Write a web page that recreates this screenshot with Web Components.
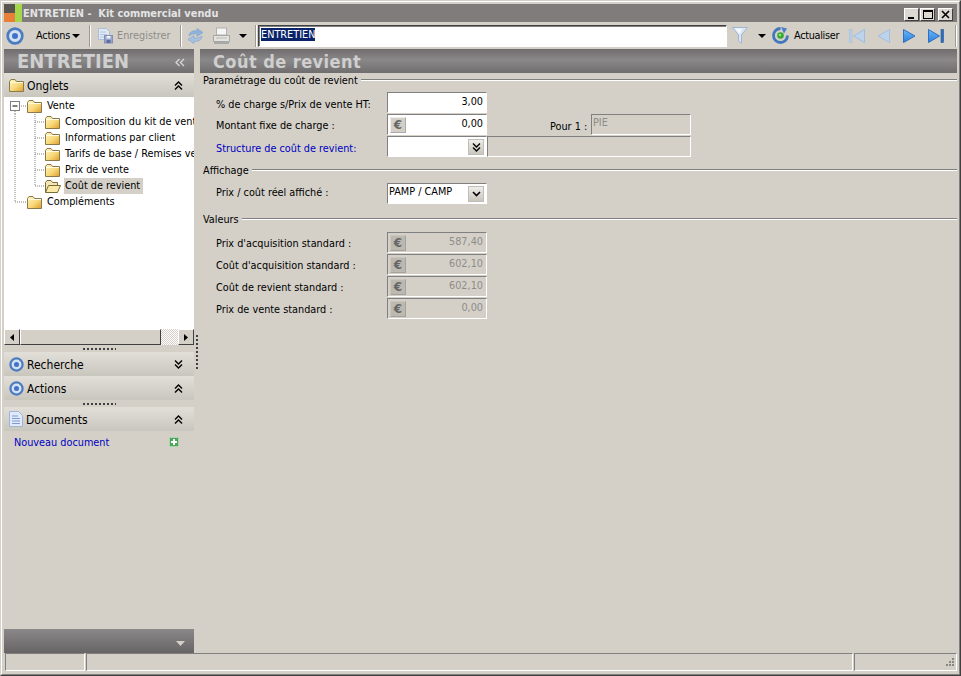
<!DOCTYPE html>
<html lang="fr"><head><meta charset="utf-8"><title>ENTRETIEN</title>
<style>
html,body{margin:0;padding:0;height:100%;overflow:hidden;background:#d4d0c8}
body{font:10.8px "DejaVu Sans Condensed","DejaVu Sans",sans-serif;font-stretch:condensed;color:#000}
</style></head><body>
<x-window>
  <x-titlebar slot="title">ENTRETIEN -&nbsp; Kit commercial vendu</x-titlebar>
  <x-toolbar slot="tools"></x-toolbar>
  <x-sidebar slot="side"></x-sidebar>
  <x-splitdots slot="split"></x-splitdots>
  <x-main slot="main"></x-main>
  <x-statusbar slot="status"></x-statusbar>
</x-window>
<script>
const TARGET=(s)=>`<svg width="${s}" height="${s}" viewBox="0 0 16 16"><circle cx="8" cy="8" r="6.500" fill="#d5e1f3" stroke="#4c7cc0" stroke-width="2.400"/><circle cx="8" cy="8" r="2.700" fill="#3f74c6"/></svg>`;
const ICONS={
target:TARGET(15),
targetbig:TARGET(18),
save:`<svg width="17" height="17" viewBox="0 0 17 17"><path d="M1.500 1.500h8l3 3v8h-11z" fill="#dfe8f5" stroke="#aebdd6"/><path d="M3 5h6M3 7.500h7M3 10h4" stroke="#b7c6de"/><rect x="7.500" y="8.500" width="8" height="7.500" fill="#98a6cc" stroke="#8490b5"/><rect x="9.500" y="9" width="4" height="2.500" fill="#eef1f8"/><rect x="9.500" y="13" width="4" height="3" fill="#5f6d9d"/></svg>`,
sync:`<svg width="17" height="18" viewBox="0 0 17 18"><path d="M2 9C2 5 6 3 10 4V1.500L16 5.500 10 9.500V7C7 6.500 4.500 7 2 9z" fill="#8fb4dc" stroke="#7d9fc6" stroke-width=".6"/><path d="M15 9c0 4-4 6-8 5v2.500L1 12.500 7 8.500V11c3 .5 5.500 0 8-2z" fill="#a7c2e0" stroke="#7d9fc6" stroke-width=".6"/></svg>`,
print:`<svg width="19" height="18" viewBox="0 0 19 18"><rect x="4.500" y="1" width="10" height="7" fill="#f6f6f6" stroke="#b0b0b0"/><path d="M1.500 8.500h16v6h-16z" fill="#e4e3df" stroke="#a5a5a3"/><rect x="2" y="14.500" width="15" height="2.500" fill="#a9a9a6"/><rect x="4" y="10.500" width="11" height="1" fill="#b9b9b6"/></svg>`,
caret:`<svg width="8" height="4" viewBox="0 0 8 4"><path d="M0 0h8L4 4z" fill="#000"/></svg>`,
funnel:`<svg width="16" height="17" viewBox="0 0 16 17"><path d="M.5 .5h15L9.500 8v8l-3-2V8z" fill="#dbe7f4" stroke="#9fb6d2"/><path d="M3 1.500h7L7.500 7z" fill="#f5f9fd"/></svg>`,
refresh:`<svg width="17" height="17" viewBox="0 0 17 17"><path d="M8.500 1.500a7 7 0 1 0 7 7" fill="none" stroke="#4277bd" stroke-width="2.800"/><path d="M9 0l6 1.500-3 5z" fill="#4a80c4"/><circle cx="8.500" cy="8.500" r="3.300" fill="#36a82f"/><circle cx="8" cy="8" r="1.300" fill="#8fe07f"/></svg>`,
first:`<svg width="16" height="14" viewBox="0 0 16 14"><rect x=".5" y=".5" width="2.500" height="13" fill="#b5cde8" stroke="#a4bedb" stroke-width=".6"/><path d="M15.500 .5v13L4.500 7z" fill="#bdd3ec" stroke="#a3bedd"/></svg>`,
prev:`<svg width="13" height="14" viewBox="0 0 13 14"><path d="M12.500 .5v13L1 7z" fill="#bdd3ec" stroke="#a3bedd"/></svg>`,
next:`<svg width="13" height="14" viewBox="0 0 13 14"><defs><linearGradient id="nx" x1="0" y1="0" x2="0" y2="1"><stop offset="0" stop-color="#6db8f5"/><stop offset="1" stop-color="#2a7de0"/></linearGradient></defs><path d="M.5 .5v13L12 7z" fill="url(#nx)" stroke="#2f6fc0"/></svg>`,
last:`<svg width="16" height="14" viewBox="0 0 16 14"><defs><linearGradient id="lx" x1="0" y1="0" x2="0" y2="1"><stop offset="0" stop-color="#6db8f5"/><stop offset="1" stop-color="#2a7de0"/></linearGradient></defs><path d="M.5 .5v13L11.500 7z" fill="url(#lx)" stroke="#2f6fc0"/><rect x="13" y=".5" width="2.500" height="13" fill="#2f6fc0" stroke="#25558f" stroke-width=".6"/></svg>`,
folder:`<svg width="15" height="13" viewBox="0 0 15 13"><defs><linearGradient id="fg" x1="0" y1="0" x2="1" y2="1"><stop offset="0" stop-color="#fff6c4"/><stop offset=".55" stop-color="#f8d878"/><stop offset="1" stop-color="#dd9c2c"/></linearGradient></defs><path d="M.5 2.500 2 .5h4l1.500 2h7v10H.5z" fill="url(#fg)" stroke="#8a7a4a"/><path d="M1 3.500h13" stroke="#fffbe0"/></svg>`,
folderopen:`<svg width="16" height="13" viewBox="0 0 16 13"><path d="M.5 12.500v-10L2 .5h4l1.500 2h5v3" fill="#f5e7b5" stroke="#7a6a3a"/><path d="M.5 12.500 3.500 5.500h12l-3 7z" fill="#fbe9a6" stroke="#7a6a3a"/></svg>`,
doc:`<svg width="14" height="16" viewBox="0 0 14 16"><path d="M.5 .5h9l4 4v11H.5z" fill="#dfe9fa" stroke="#9fb4d8"/><path d="M3 5h6M3 7.500h8M3 10h8M3 12.500h8" stroke="#7f9bd0"/></svg>`,
plus:`<svg width="10" height="10" viewBox="0 0 10 10"><rect width="10" height="10" fill="#4ea65a"/><rect x=".5" y=".5" width="9" height="9" fill="none" stroke="#a9d6ae"/><path d="M5 2v6M2 5h6" stroke="#fff" stroke-width="2"/></svg>`,
up:`<svg width="9" height="9" viewBox="0 0 9 9"><path d="M1 4.500 4.500 1 8 4.500M1 8.500 4.500 5 8 8.500" fill="none" stroke="#000" stroke-width="1.400"/></svg>`,
down:`<svg width="9" height="9" viewBox="0 0 9 9"><path d="M1 .5 4.500 4 8 .5M1 4.500 4.500 8 8 4.500" fill="none" stroke="#000" stroke-width="1.400"/></svg>`,
left2:`<svg width="10" height="9" viewBox="0 0 10 9"><path d="M4.500 1 1 4.500 4.500 8M9 1 5.500 4.500 9 8" fill="none" stroke="#d8d8d8" stroke-width="1.300"/></svg>`
};
function def(name,css,html,extra){
  customElements.define(name,class extends HTMLElement{
    constructor(){super();const r=this.attachShadow({mode:'open'});
      r.innerHTML=`<style>${css}</style>`+(typeof html==='function'?html(this):html);}
    connectedCallback(){ if(extra) extra.call(this,this.shadowRoot); }
  });
}
def('x-icon',':host{display:inline-flex;flex:none;line-height:0}','',function(r){
  const s=document.createElement('span');s.style.cssText='display:inline-flex';s.innerHTML=ICONS[this.getAttribute('name')]||'';r.appendChild(s);
});
def('x-window',`
:host{display:block;box-sizing:border-box;width:961px;height:676px;background:#d4d0c8;border:1px solid;border-color:#d4d0c8 #404040 #404040 #d4d0c8}
.a{box-sizing:border-box;height:100%;border:1px solid;border-color:#fff #808080 #808080 #fff;padding:2px;display:flex;flex-direction:column}
.b{flex:1;min-height:0;display:flex}
`,`<div class="a"><slot name="title"></slot><slot name="tools"></slot>
<div class="b"><slot name="side"></slot><slot name="split"></slot><slot name="main"></slot></div>
<slot name="status"></slot></div>`);
def('x-titlebar',`
:host{display:flex;flex:none;align-items:center;height:18px;background:#807c7c;color:#e4e4e4;font:bold 10.9px "DejaVu Sans Condensed","DejaVu Sans",sans-serif;font-stretch:condensed;white-space:pre}
.logo{width:18px;height:18px;flex:none;display:grid;grid-template:9px 9px/11px 7px;margin-right:1px}
.t{flex:1}
.btns{display:flex;margin-right:4px;padding-top:2px}
.btn{box-sizing:border-box;width:15px;height:13px;background:#dcd9d2;border:1px solid;border-color:#fff #404040 #404040 #fff;display:flex;align-items:center;justify-content:center;line-height:0}
`,`<div class="logo"><i style="background:#58544f"></i><i style="background:#a4d84a;grid-row:1/3;grid-column:2"></i><i style="background:#e8803a"></i></div>
<div class="t"><slot></slot></div>
<div class="btns">
<div class="btn" style="margin-right:1px"><svg width="9" height="9"><rect x="1" y="7" width="6" height="2" fill="#000"/></svg></div>
<div class="btn" style="margin-right:3px"><svg width="10" height="9"><rect x=".5" y=".5" width="9" height="8" fill="none" stroke="#000"/><rect x="0" y="0" width="10" height="2"/></svg></div>
<div class="btn"><svg width="9" height="9"><path d="M1 1l7 7M8 1 1 8" stroke="#000" stroke-width="1.600"/></svg></div>
</div>`);
def('x-toolbar',`
:host{display:flex;flex:none;align-items:center;height:27px;padding-left:2px;font:inherit}
.sep{width:1px;height:22px;background:#9c9a94;border-right:1px solid #fff;flex:none}
.tx{white-space:nowrap}
.dim{color:#8e8c88}
.inp{box-sizing:border-box;width:469px;height:22px;background:#fff;border:1px solid;border-color:#404040 #fff #fff #404040;box-shadow:inset 1px 1px 0 #808080;padding:2px 0 0 2px;flex:none}
.sel{background:#0a246a;color:#fff}
`,`<x-icon name="targetbig"></x-icon>
<span class="tx" style="margin-left:12px;width:34px;display:inline-block;letter-spacing:-.2px">Actions</span><x-icon name="caret" style="margin-left:2px"></x-icon>
<span class="sep" style="margin-left:9px"></span>
<x-icon name="save" style="margin-left:6px"></x-icon><span class="tx dim" style="margin-left:3px;width:53px;display:inline-block">Enregistrer</span>
<span class="sep" style="margin-left:10px"></span>
<x-icon name="sync" style="margin-left:5px"></x-icon><x-icon name="print" style="margin-left:8px"></x-icon><x-icon name="caret" style="margin-left:8px"></x-icon>
<span class="sep" style="margin-left:8px"></span>
<div class="inp" style="margin-left:1px"><span class="sel">ENTRETIEN</span></div>
<x-icon name="funnel" style="margin-left:5px"></x-icon><x-icon name="caret" style="margin-left:10px"></x-icon>
<x-icon name="refresh" style="margin-left:6px"></x-icon><span class="tx" style="margin-left:5px;width:46px;display:inline-block;letter-spacing:-.3px">Actualiser</span>
<x-icon name="first" style="margin-left:9px"></x-icon><x-icon name="prev" style="margin-left:12px"></x-icon><x-icon name="next" style="margin-left:13px"></x-icon><x-icon name="last" style="margin-left:12px"></x-icon>
<span class="sep" style="margin-left:11px"></span>`);
def('x-darkhead',`
:host{display:flex;align-items:center;flex:none;height:24px;background:linear-gradient(#6f6d6d,#8a8888 45%,#6f6d6d);color:#cfcfcf;font:bold 20px "DejaVu Sans Condensed","DejaVu Sans",sans-serif;font-stretch:condensed;padding-left:13px;white-space:nowrap;overflow:hidden}
.t{flex:1}
`,`<span class="t"><slot></slot></span><slot name="end"></slot>`);
def('x-panelhead',`
:host{display:flex;align-items:center;flex:none;height:24px;background:linear-gradient(#e2dfd9,#c9c6be);font-size:12px;padding-left:5px;white-space:nowrap}
.t{flex:1;margin-left:3px;padding-top:1px}
.end{margin-right:11px;display:flex}
`,`<slot name="icon"></slot><span class="t"><slot></slot></span><span class="end"><slot name="end"></slot></span>`);
def('x-treerow',`
:host{display:flex;height:16px;align-items:center;white-space:nowrap}
.l{padding:1px;margin-left:4px;line-height:14px;height:14px;display:block}
:host([selected]) .l{background:#d4d0c8;padding-right:3px;margin-left:3px}
svg{flex:none}
`,(h)=>{
 const k=h.getAttribute('k');const d='stroke="#808080" stroke-dasharray="1 1"';
 const m={root:[23,`<path d="M11 13v3" ${d}/><path d="M15 8h8" ${d}/><rect x="6.500" y="3.500" width="9" height="9" fill="#fff" stroke="#808080"/><path d="M8.500 8h5" stroke="#000"/>`],
  child:[41,`<path d="M11 0v16M31 0v16M31 8h10" ${d}/>`],
  lastchild:[41,`<path d="M11 0v16M31 0v8M31 8h10" ${d}/>`],
  lastroot:[23,`<path d="M11 0v8M11 8h11" ${d}/>`]}[k];
 return `<svg width="${m[0]}" height="16" viewBox="0 0 ${m[0]} 16">${m[1]}</svg><x-icon name="${h.hasAttribute('open')?'folderopen':'folder'}"></x-icon><span class="l"><slot></slot></span>`;
});
def('x-scrollbar',`
:host{display:flex;flex:none;height:16px;background:repeating-conic-gradient(#d4d0c8 0 25%,#fff 0 50%) 0 0/2px 2px}
.b{box-sizing:border-box;background:#d4d0c8;border:1px solid;border-color:#fff #404040 #404040 #fff;height:16px;display:flex;align-items:center;justify-content:center;flex:none}
`,`<div class="b" style="width:16px"><svg width="4" height="7"><path d="M4 0v7L0 3.500z"/></svg></div>
<div class="b" style="width:141px"></div><div style="flex:1"></div>
<div class="b" style="width:16px"><svg width="4" height="7"><path d="M0 0v7l4-3.500z"/></svg></div>`);
def('x-grip',`
:host{display:flex;flex:none;height:7px;justify-content:center;align-items:center}
div{width:33px;height:2px;background:repeating-linear-gradient(90deg,#404040 0 2px,transparent 2px 4px)}
`,`<div></div>`);
def('x-sidebar',`
:host{display:flex;flex-direction:column;flex:none;width:190px;height:100%;min-height:0}
.tree{flex:none;height:232px;background:#fff;padding-top:1px;overflow:hidden;box-sizing:border-box}
.link{height:22px;display:flex;align-items:center;padding:0 15px 0 10px;color:#0000c0;justify-content:space-between}
.sp{flex:1}
.foot{flex:none;height:24px;background:linear-gradient(#8a8888,#666464);display:flex;justify-content:flex-end;align-items:center;padding:4px 9px 0 0;box-sizing:border-box}
`,`<x-darkhead>ENTRETIEN<x-icon name="left2" slot="end" style="margin-right:9px;margin-top:2px"></x-icon></x-darkhead>
<x-panelhead><x-icon name="folder" slot="icon"></x-icon>Onglets<x-icon name="up" slot="end"></x-icon></x-panelhead>
<div class="tree">
<x-treerow k="root">Vente</x-treerow>
<x-treerow k="child">Composition du kit de vente</x-treerow>
<x-treerow k="child">Informations par client</x-treerow>
<x-treerow k="child">Tarifs de base / Remises vente</x-treerow>
<x-treerow k="child">Prix de vente</x-treerow>
<x-treerow k="lastchild" open selected>Coût de revient</x-treerow>
<x-treerow k="lastroot">Compléments</x-treerow>
</div>
<x-scrollbar></x-scrollbar>
<x-grip></x-grip>
<x-panelhead><x-icon name="target" slot="icon"></x-icon>Recherche<x-icon name="down" slot="end"></x-icon></x-panelhead>
<x-panelhead><x-icon name="target" slot="icon"></x-icon>Actions<x-icon name="up" slot="end"></x-icon></x-panelhead>
<x-grip></x-grip>
<x-panelhead><x-icon name="doc" slot="icon"></x-icon>Documents<x-icon name="up" slot="end"></x-icon></x-panelhead>
<div class="link"><span>Nouveau document</span><x-icon name="plus"></x-icon></div>
<div class="sp"></div>
<div class="foot"><svg width="9" height="5"><path d="M0 0h9L4.500 5z" fill="#d4d0c8"/></svg></div>
`);
def('x-splitdots',`
:host{display:flex;flex:none;width:6px;padding-top:286px;box-sizing:border-box;justify-content:center}
div{width:2px;height:34px;background:repeating-linear-gradient(#404040 0 2px,transparent 2px 4px)}
`,`<div></div>`);
def('x-legend',`
:host{display:flex;align-items:center;height:14px;padding-left:3px;white-space:nowrap}
i{flex:1;height:2px;margin-left:3px;background:linear-gradient(#808080 1px,#fff 1px)}
`,`<slot></slot><i></i>`);
def('x-input',`
:host{display:flex;box-sizing:border-box;width:100px;height:21px;margin-bottom:1px;border:1px solid;border-color:#808080 #fff #fff #808080;background:#fff;align-items:flex-start;padding:1px 3px 0 1px;flex:none}
:host([disabled]){background:#d4d0c8;color:#8e8c88}
.t{flex:1;text-align:right;padding-top:1px}
:host([text]) .t{text-align:left;padding-top:0}
.eu{box-sizing:border-box;width:16px;height:16px;margin:1px;background:#d4d0c8;color:#666;border:1px solid;border-color:#eee #aaa #aaa #eee;font:bold 12px "DejaVu Sans",sans-serif;text-align:center;line-height:14px}
:host([disabled]) .eu{background:#bdb9b1;border-color:#c9c6be #a5a29b #a5a29b #c9c6be}
.dd{box-sizing:border-box;width:16px;height:16px;margin:1px -1px 0 0;background:linear-gradient(#f0eeea,#c8c5be);border:1px solid #c0bdb6;display:flex;align-items:center;justify-content:center}
`,(h)=>{
 const a=h.hasAttribute('euro')?'<span class="eu">€</span>':'';
 const s=h.getAttribute('dd');
 const b=s==='2'?`<span class="dd">${ICONS.down}</span>`:s==='1'?`<span class="dd"><svg width="9" height="6"><path d="M1 1l3.500 3.500L8 1" fill="none" stroke="#000" stroke-width="1.600"/></svg></span>`:'';
 return `${a}<span class="t"><slot></slot></span>${b}`;
});
def('x-row',`
:host{display:flex;height:22px;padding-left:16px;align-items:flex-start;white-space:nowrap}
.lab{box-sizing:border-box;width:171px;flex:none;padding-top:var(--lab,6px)}
:host([link]) .lab{color:#0000c0}
`,`<div class="lab"><slot name="label"></slot></div><slot></slot>`);
def('x-main',`
:host{display:flex;flex-direction:column;flex:1;min-width:0;height:100%}
.body{flex:1}
.after{display:flex;align-items:flex-start}
.pour{margin-left:63px;padding-top:6px;width:41px}
.v{--lab:5px}
`,`<x-darkhead style="font-size:18px;letter-spacing:.45px">Coût de revient</x-darkhead>
<div class="body">
<x-legend>Paramétrage du coût de revient</x-legend>
<div style="height:5px"></div>
<x-row><span slot="label">% de charge s/Prix de vente HT:</span><x-input>3,00</x-input></x-row>
<x-row class="v"><span slot="label">Montant fixe de charge :</span><div class="after"><x-input euro>0,00</x-input><span class="pour">Pour 1 :</span><x-input disabled text>PIE</x-input></div></x-row>
<x-row link><span slot="label">Structure de coût de revient:</span><div class="after"><x-input dd="2"></x-input><x-input disabled style="width:204px"></x-input></div></x-row>
<div style="height:5px"></div>
<x-legend>Affichage</x-legend>
<div style="height:6px"></div>
<x-row style="--lab:3px"><span slot="label">Prix / coût réel affiché :</span><x-input dd="1" text>PAMP / CAMP</x-input></x-row>
<div style="height:7px"></div>
<x-legend>Valeurs</x-legend>
<div style="height:6px"></div>
<x-row class="v"><span slot="label">Prix d'acquisition standard :</span><x-input euro disabled>587,40</x-input></x-row>
<x-row class="v"><span slot="label">Coût d'acquisition standard :</span><x-input euro disabled>602,10</x-input></x-row>
<x-row class="v"><span slot="label">Coût de revient standard :</span><x-input euro disabled>602,10</x-input></x-row>
<x-row class="v"><span slot="label">Prix de vente standard :</span><x-input euro disabled>0,00</x-input></x-row>
</div>`);
def('x-statusbar',`
:host{display:flex;flex:none;height:19px;gap:1px;padding:0 0 0 1px;box-sizing:border-box;position:relative}
div{box-sizing:border-box;border:1px solid;border-color:#808080 #fff #fff #808080;height:18px}
.g{position:absolute;right:2px;bottom:3px;border:0;width:12px;height:12px}
`,`<div style="width:80px"></div><div style="width:767px"></div><div style="flex:1"></div>
<div class="g"><svg width="12" height="12" fill="#8a8780"><rect x="9" y="1" width="2" height="2"/><rect x="6" y="4" width="2" height="2"/><rect x="9" y="4" width="2" height="2"/><rect x="3" y="7" width="2" height="2"/><rect x="6" y="7" width="2" height="2"/><rect x="9" y="7" width="2" height="2"/></svg></div>`);
</script>
</body></html>
